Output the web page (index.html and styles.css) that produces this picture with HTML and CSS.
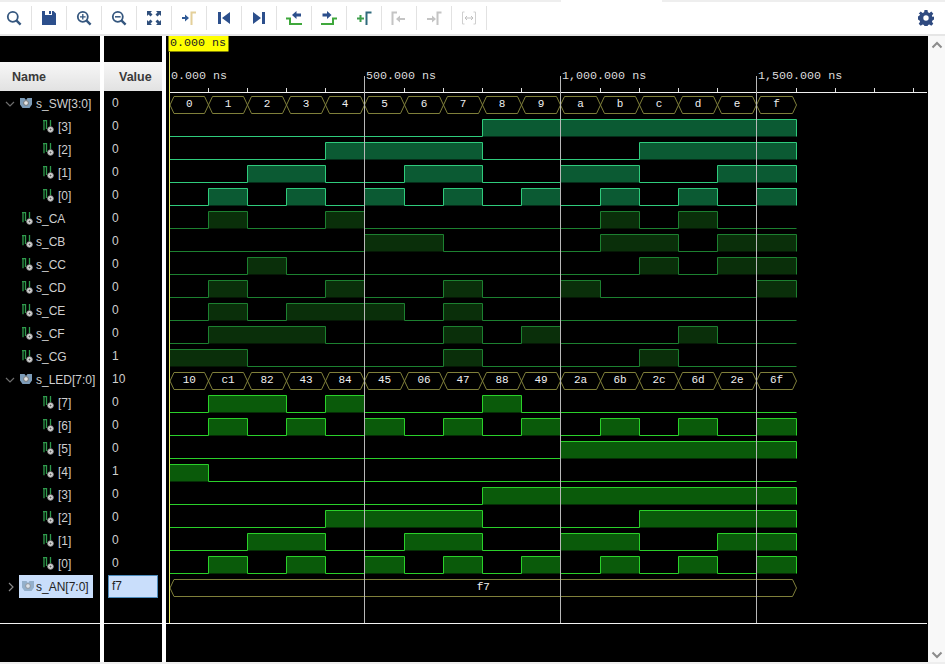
FILE: index.html
```html
<!DOCTYPE html>
<html lang="en">
<head>
    <meta charset="UTF-8">
    <title>Waveform</title>
    <link rel="stylesheet" href="styles.css">
</head>
<body>
    <svg class="defs" width="0" height="0">
        <symbol id="wire" viewBox="0 0 11 13">
            <path d="M0 .7h3.500v8.300M1 .7v9.500M7.500 0v6" fill="none" stroke="#2f9a4c" stroke-width="1.300"/>
            <circle cx="7.500" cy="9.500" r="2.800" fill="#e2e2e2" stroke="#8a8a8a"/>
            <circle cx="7.500" cy="9.500" r="1" fill="#555555"/>
        </symbol>
        <symbol id="bus" viewBox="0 0 12 11">
            <path d="M0 0h4.500L6 2l1.500-2H12v6.500L9.500 10h-7L0 6.500z" fill="#7d9cb8"/>
            <circle cx="6" cy="5" r="2.400" fill="#e4e4e4" stroke="#777777"/>
        </symbol>
        <symbol id="lens" viewBox="0 0 16 16">
            <circle cx="6.800" cy="6.800" r="5" fill="none" stroke="#34567e" stroke-width="1.800"/>
            <path d="M10.600 10.600l4 4" stroke="#34567e" stroke-width="2.400"/>
        </symbol>
        <symbol id="chev-down" viewBox="0 0 10 6">
            <path d="M1 1l4 4 4-4" fill="none" stroke="#6e6e6e" stroke-width="1.200"/>
        </symbol>
        <symbol id="chev-right" viewBox="0 0 6 10">
            <path d="M1 1l4 4-4 4" fill="none" stroke="#8a8a8a" stroke-width="1.200"/>
        </symbol>
    </svg>

    <div class="top-strip"><span class="top-tab"></span></div>
    <div class="toolbar">
        <div class="tool"><svg class="ico"><use href="#lens"/></svg></div>
        <div class="tool"><svg class="ico" viewBox="0 0 16 16"><path d="M1 1h3v4h7V1h1.500L15 3.500V15H1z" fill="#2c4f8c"/><path d="M8 1h2v3H8z" fill="#2c4f8c"/></svg></div>
        <div class="tool"><svg class="ico" viewBox="0 0 16 16"><use href="#lens"/><path d="M4 6.800h5.600M6.800 4v5.600" stroke="#34567e" stroke-width="1.300"/></svg></div>
        <div class="tool"><svg class="ico" viewBox="0 0 16 16"><use href="#lens"/><path d="M4 6.800h5.600" stroke="#34567e" stroke-width="1.500"/></svg></div>
        <div class="tool"><svg class="ico" viewBox="0 0 16 16"><path d="M1 1h5L4.500 2.500 6.500 4.500 4.500 6.500 2.500 4.500 1 6zM15 1v5l-1.500-1.500-2 2-2-2 2-2L10 1zM1 15v-5l1.500 1.500 2-2 2 2-2 2L6 15zM15 15h-5l1.500-1.500-2-2 2-2 2 2L15 10z" fill="#2f4f7c"/></svg></div>
        <div class="tool"><svg class="ico" viewBox="0 0 16 16"><path d="M1 7h3V4.500L8 8l-4 3.500V9H1z" fill="#2f5a96"/><path d="M10.500 15V2.500H15" fill="none" stroke="#e4d09a" stroke-width="2"/></svg></div>
        <div class="tool"><svg class="ico" viewBox="0 0 16 16"><path d="M2 2h3v12H2zM14 2v12L6 8z" fill="#2c4f8c"/></svg></div>
        <div class="tool"><svg class="ico" viewBox="0 0 16 16"><path d="M11 2h3v12h-3zM2 2v12l8-6z" fill="#2c4f8c"/></svg></div>
        <div class="tool"><svg class="ico" viewBox="0 0 16 16"><path d="M0 8.500h4V14h12" fill="none" stroke="#3fa83c" stroke-width="2"/><path d="M6 5l4.500-4v2.500H15v3h-4.500V9z" fill="#2c4f8c"/></svg></div>
        <div class="tool"><svg class="ico" viewBox="0 0 16 16"><path d="M0 14h12V8.500h4" fill="none" stroke="#3fa83c" stroke-width="2"/><path d="M10.500 5L6 1v2.500H1.500v3H6V9z" fill="#2c4f8c"/></svg></div>
        <div class="tool"><svg class="ico" viewBox="0 0 16 16"><path d="M1 8.500h7M4.500 5v7" stroke="#3f9f4c" stroke-width="2"/><path d="M10.500 15V2.500H15.500" fill="none" stroke="#2f6a7c" stroke-width="2"/></svg></div>
        <div class="tool"><svg class="ico" viewBox="0 0 16 16"><path d="M1.500 15V2.500H6" fill="none" stroke="#c4c4c4" stroke-width="2"/><path d="M5 9l4-3.500V8h5v2H9v2.500z" fill="#c4c4c4"/></svg></div>
        <div class="tool"><svg class="ico" viewBox="0 0 16 16"><path d="M1 8h5V5.500L10 9l-4 3.500V10H1z" fill="#c4c4c4"/><path d="M11.500 15V2.500H15.500" fill="none" stroke="#c4c4c4" stroke-width="2"/></svg></div>
        <div class="tool"><svg class="ico" viewBox="0 0 16 16"><path d="M1.500 14V2h2M14.500 14V2h-2M1.500 14h2M14.500 14h-2" fill="none" stroke="#cfcfcf"/><path d="M4 8h8M6 6l-2 2 2 2M10 6l2 2-2 2" fill="none" stroke="#c0c0c0"/></svg></div>
        <div class="tool-fill"></div>
        <svg class="ico gear" viewBox="0 0 16 16"><path d="M6.500 0h3l.4 2.300 1.500.6L13.300 1.500l2 2.200-1.400 1.900.6 1.400L16 6.500v3l-1.500.9-.6 1.400 1.400 1.900-2 2.100-1.900-1.300-1.500.6-.4 2.300h-3l-.4-2.300-1.500-.6-1.900 1.300-2-2.100 1.400-1.900-.6-1.400L0 9.500v-3l1.500-.9.600-1.400L.7 3.700l2-2.200 1.900 1.400 1.500-.6zM8 5.300A2.700 2.700 0 1 0 8 10.700 2.700 2.700 0 1 0 8 5.300z" fill="#2f4a80" fill-rule="evenodd"/></svg>
    </div>

    <div class="main">
        <div class="col col-name">
            <div class="col-head head-name">Name</div>
            <div class="rows">
                <div class="row"><svg class="chev"><use href="#chev-down"/></svg><svg class="sig-bus"><use href="#bus"/></svg>s_SW[3:0]</div>
                <div class="row child"><svg class="sig"><use href="#wire"/></svg>[3]</div>
                <div class="row child"><svg class="sig"><use href="#wire"/></svg>[2]</div>
                <div class="row child"><svg class="sig"><use href="#wire"/></svg>[1]</div>
                <div class="row child"><svg class="sig"><use href="#wire"/></svg>[0]</div>
                <div class="row"><svg class="sig"><use href="#wire"/></svg>s_CA</div>
                <div class="row"><svg class="sig"><use href="#wire"/></svg>s_CB</div>
                <div class="row"><svg class="sig"><use href="#wire"/></svg>s_CC</div>
                <div class="row"><svg class="sig"><use href="#wire"/></svg>s_CD</div>
                <div class="row"><svg class="sig"><use href="#wire"/></svg>s_CE</div>
                <div class="row"><svg class="sig"><use href="#wire"/></svg>s_CF</div>
                <div class="row"><svg class="sig"><use href="#wire"/></svg>s_CG</div>
                <div class="row"><svg class="chev"><use href="#chev-down"/></svg><svg class="sig-bus"><use href="#bus"/></svg>s_LED[7:0]</div>
                <div class="row child"><svg class="sig"><use href="#wire"/></svg>[7]</div>
                <div class="row child"><svg class="sig"><use href="#wire"/></svg>[6]</div>
                <div class="row child"><svg class="sig"><use href="#wire"/></svg>[5]</div>
                <div class="row child"><svg class="sig"><use href="#wire"/></svg>[4]</div>
                <div class="row child"><svg class="sig"><use href="#wire"/></svg>[3]</div>
                <div class="row child"><svg class="sig"><use href="#wire"/></svg>[2]</div>
                <div class="row child"><svg class="sig"><use href="#wire"/></svg>[1]</div>
                <div class="row child"><svg class="sig"><use href="#wire"/></svg>[0]</div>
                <div class="row"><svg class="chev chev-closed"><use href="#chev-right"/></svg><div class="selected"><svg class="sig-bus"><use href="#bus"/></svg>s_AN[7:0]</div></div>
            </div>
        </div>
        <div class="col col-value">
            <div class="col-head head-value">Value</div>
            <div class="rows">
                <div class="val">0</div>
                <div class="val">0</div>
                <div class="val">0</div>
                <div class="val">0</div>
                <div class="val">0</div>
                <div class="val">0</div>
                <div class="val">0</div>
                <div class="val">0</div>
                <div class="val">0</div>
                <div class="val">0</div>
                <div class="val">0</div>
                <div class="val">1</div>
                <div class="val">10</div>
                <div class="val">0</div>
                <div class="val">0</div>
                <div class="val">0</div>
                <div class="val">1</div>
                <div class="val">0</div>
                <div class="val">0</div>
                <div class="val">0</div>
                <div class="val">0</div>
                <div class="val val-selected">f7</div>
            </div>
        </div>
        <div class="col col-wave">
            <svg id="wave" class="wave" viewBox="166 36 762 626"></svg>
        </div>
        <div class="scrollbar">
            <svg class="arrow" viewBox="0 0 12 8"><path d="M1.500 6.500L6 2l4.500 4.500" fill="none" stroke="#8c8c8c" stroke-width="2"/></svg>
            <svg class="arrow" viewBox="0 0 12 8"><path d="M1.500 1.500L6 6l4.500-4.500" fill="none" stroke="#8c8c8c" stroke-width="2"/></svg>
        </div>
    </div>
    <div class="bottom-strip"></div>

    <script src="wave.js"></script>
</body>
</html>
```
FILE: styles.css
```css
html, body {
    margin: 0;
    height: 100%;
    overflow: hidden;
    background-color: #ffffff;
    font-family: "Liberation Sans", Arial, sans-serif;
    font-size: 12px;
}
.defs {
    position: absolute;
}
.top-strip {
    height: 2px;
    background-color: #eeeeee;
    padding-left: 561px;
}
.top-tab {
    display: block;
    width: 101px;
    height: 2px;
    background-color: #ffffff;
}
.toolbar {
    display: flex;
    align-items: center;
    height: 32px;
    border-bottom: 2px solid #e6e6e6;
}
.tool {
    display: flex;
    align-items: center;
    justify-content: center;
    width: 34px;
    height: 24px;
    border-right: 1px solid #e2e2e2;
}
.tool:first-child {
    margin-left: -3px;
}
.tool-fill {
    flex: 1;
}
.ico {
    width: 16px;
    height: 16px;
}
.gear {
    margin-right: 11px;
}
.main {
    display: flex;
    height: 626px;
}
.col {
    background-color: #000000;
}
.col-name {
    width: 100px;
    margin-right: 4px;
}
.col-value {
    width: 58px;
    margin-right: 4px;
}
.col-wave {
    width: 762px;
}
.col-head {
    height: 29px;
    margin-top: 26px;
    margin-bottom: 1px;
    line-height: 31px;
    font-size: 12.500px;
    font-weight: bold;
    color: #3a3a3a;
    background: linear-gradient(#f7f7f7, #e2e2e2);
}
.head-name {
    padding-left: 12px;
}
.head-value {
    padding-left: 15px;
}
.rows {
    height: 531px;
    border-bottom: 1px solid #f2f2f2;
}
.row {
    position: relative;
    display: flex;
    align-items: center;
    height: 23px;
    padding-left: 22px;
    color: #cfcfcf;
    white-space: nowrap;
}
.row.child {
    padding-left: 43px;
}
.chev {
    position: absolute;
    left: 5px;
    top: 9px;
    width: 10px;
    height: 6px;
}
.chev-closed {
    left: 8px;
    top: 7px;
    width: 6px;
    height: 10px;
}
.sig {
    width: 11px;
    height: 13px;
    margin-right: 3px;
}
.row.child .sig {
    margin-right: 4px;
}
.sig-bus {
    width: 12px;
    height: 11px;
    margin-left: -2px;
    margin-right: 4px;
}
.selected {
    display: flex;
    align-items: center;
    flex: none;
    width: 74px;
    height: 23px;
    margin-left: -3px;
    padding-left: 3px;
    box-sizing: border-box;
    background-color: #c9defb;
    color: #222222;
}
.selected .sig-bus {
    margin-left: 0;
    margin-right: 2px;
    opacity: .7;
}
.val {
    height: 23px;
    line-height: 23px;
    padding-left: 8px;
    color: #cfcfcf;
}
.val-selected {
    width: 50px;
    margin-left: 4px;
    padding-left: 3px;
    line-height: 21px;
    box-sizing: border-box;
    background-color: #c9defb;
    border: 1px solid #4d8cbc;
    color: #222222;
}
.wave {
    display: block;
    width: 762px;
    height: 626px;
    background-color: #000000;
}
.wave text {
    font-family: "Liberation Mono", "Courier New", monospace;
    font-size: 11.700px;
    fill: #dcdcdc;
}
.wave .bus-text {
    font-size: 11px;
    fill: #f0f0f0;
    text-anchor: middle;
}
.wave .cursor-text {
    fill: #222222;
}
.scrollbar {
    display: flex;
    flex-direction: column;
    justify-content: space-between;
    align-items: center;
    width: 17px;
    height: 626px;
    box-sizing: border-box;
    padding: 5px 0 3px;
    background-color: #f8f8f8;
}
.arrow {
    width: 12px;
    height: 8px;
}
.bottom-strip {
    height: 2px;
    background-color: #eeeeee;
}
```
FILE: wave.js
```js
const NS = "http://www.w3.org/2000/svg";
const svg = document.getElementById("wave");

const X0 = 168.3;
const STEP = 39.2;
const END = 796.5;
const RULER_Y = 92;
const ROW_H = 23;
const BOTTOM = 623;

const colors = {
    sw:  { fill: "#0b5a33", line: "#2fcb7c" },
    seg: { fill: "#0a2f0a", line: "#1c8030" },
    led: { fill: "#0a5a0a", line: "#2ad02a" }
};

const ledValues = ["10", "c1", "82", "43", "84", "45", "06", "47", "88", "49", "2a", "6b", "2c", "6d", "2e", "6f"];
const swValues = ["0", "1", "2", "3", "4", "5", "6", "7", "8", "9", "a", "b", "c", "d", "e", "f"];

const segs = [
    [1, 4, 11, 13],
    [5, 6, 11, 12, 14, 15],
    [2, 12, 14, 15],
    [1, 4, 7, 10, 15],
    [1, 3, 4, 5, 7],
    [1, 2, 3, 7, 9, 13],
    [0, 1, 7, 12]
];

function add(tag, attrs, text) {
    let el = document.createElementNS(NS, tag);
    for (let key in attrs) el.setAttribute(key, attrs[key]);
    if (text) el.textContent = text;
    svg.appendChild(el);
    return el;
}

function tickX(k) {
    return Math.round(X0 + STEP * k) + 0.5;
}

function xAt(k) {
    if (k === 0) return 170;
    return k >= 16 ? END : tickX(k);
}

function rowTop(i) {
    return RULER_Y + ROW_H * i;
}

// one bit signal, highs = list of step indexes
function drawBit(i, highs, c) {
    let low = rowTop(i) + 21.5;
    let high = low - 17;
    // merge neighbouring steps so the fill has no seams
    highs.forEach(k => {
        if (highs.includes(k - 1)) return;
        let end = k + 1;
        while (highs.includes(end)) end++;
        add("rect", { x: xAt(k), y: high, width: xAt(end) - xAt(k), height: 17, fill: c.fill });
    });
    let level = highs.includes(0);
    let d = "M170 " + (level ? high : low);
    for (let k = 1; k < 16; k++) {
        let on = highs.includes(k);
        if (on !== level) {
            d += "H" + xAt(k) + "V" + (on ? high : low);
            level = on;
        }
    }
    d += "H" + END;
    if (level) d += "V" + low;
    add("path", { d: d, fill: "none", stroke: c.line, "stroke-width": 1 });
}

function drawBus(i, values, spans) {
    let top = rowTop(i) + 4.5;
    let bottom = rowTop(i) + 21.5;
    let mid = (top + bottom) / 2;
    values.forEach((value, n) => {
        let a = spans ? xAt(spans[n][0]) : xAt(n);
        let b = spans ? xAt(spans[n][1]) : xAt(n + 1);
        let d = "M" + a + " " + mid + "L" + (a + 4) + " " + top + "H" + (b - 4) + "L" + b + " " + mid + "L" + (b - 4) + " " + bottom + "H" + (a + 4) + "Z";
        add("path", { d: d, fill: "none", stroke: "#7f7f3a", "stroke-width": 1 });
        add("text", { class: "bus-text", x: (a + b) / 2, y: mid + 1.5 }, value);
    });
}

function bitsOf(values, bit) {
    let out = [];
    values.forEach((value, k) => {
        if ((parseInt(value, 16) >> bit) & 1) out.push(k);
    });
    return out;
}

// ruler
add("path", { d: "M170 " + (RULER_Y + 0.5) + "H927", stroke: "#f0f0f0", "stroke-width": 1 });
for (let k = 1; k <= 19; k++) {
    if (k % 5 !== 0) add("path", { d: "M" + tickX(k) + " 88V92", stroke: "#e0e0e0" });
}
["0.000 ns", "500.000 ns", "1,000.000 ns", "1,500.000 ns"].forEach((label, n) => {
    let x = n === 0 ? 171 : tickX(n * 5) + 1.5;
    add("text", { x: x, y: 79 }, label);
});

// signals
drawBus(0, swValues);
[3, 2, 1, 0].forEach((bit, n) => drawBit(n + 1, bitsOf(swValues, bit), colors.sw));
segs.forEach((highs, n) => drawBit(n + 5, highs, colors.seg));
drawBus(12, ledValues);
[7, 6, 5, 4, 3, 2, 1, 0].forEach((bit, n) => drawBit(n + 13, bitsOf(ledValues, bit), colors.led));
drawBus(21, ["f7"], [[0, 16]]);

// grid lines at the major ticks, cursor on top
[5, 10, 15].forEach(k => {
    add("path", { d: "M" + tickX(k) + " 76V" + BOTTOM, stroke: "#b8b8b8", "stroke-width": 1 });
});
add("path", { d: "M166 " + (BOTTOM + 0.5) + "H927", stroke: "#f2f2f2", "stroke-width": 1 });
add("path", { d: "M169.500 52V" + BOTTOM, stroke: "#e8e860", "stroke-width": 1 });
add("rect", { x: 168.5, y: 36, width: 60, height: 15.5, fill: "#ffff00" });
add("text", { class: "cursor-text", x: 170, y: 46 }, "0.000 ns");
```
